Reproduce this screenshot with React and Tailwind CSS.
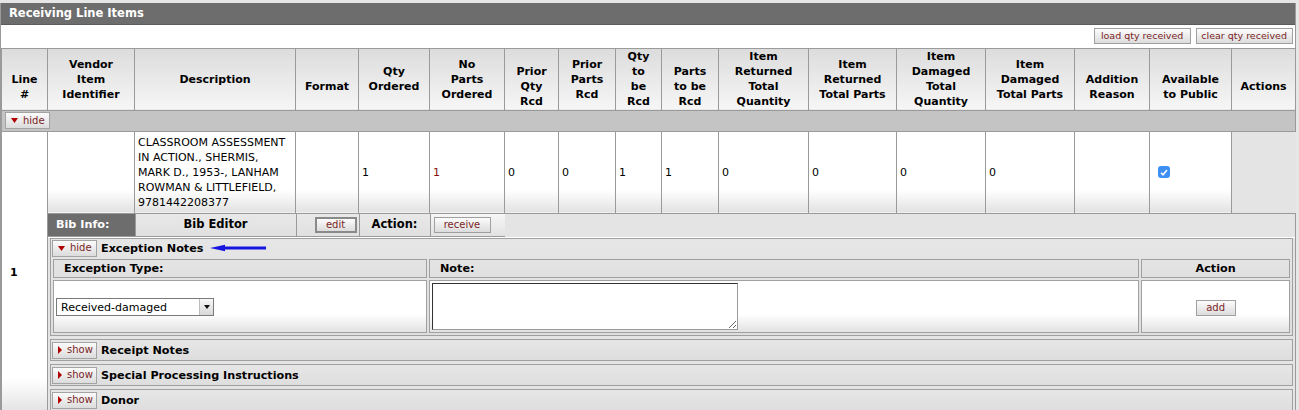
import React from 'react';

const headers = [
  { lines: ['Line', '#'], pb: 'pb-[8px]' },
  { lines: ['Vendor', 'Item', 'Identifier'], pb: 'pb-[8px]' },
  { lines: ['Description'], pb: 'pb-[23px]' },
  { lines: ['Format'], pb: 'pb-[16px]' },
  { lines: ['Qty', 'Ordered'], pb: 'pb-[16px]' },
  { lines: ['No', 'Parts', 'Ordered'], pb: 'pb-[8px]' },
  { lines: ['Prior', 'Qty', 'Rcd'], pb: 'pb-[1px]' },
  { lines: ['Prior', 'Parts', 'Rcd'], pb: 'pb-[8px]' },
  { lines: ['Qty', 'to', 'be', 'Rcd'], pb: 'pb-[1px]' },
  { lines: ['Parts', 'to be', 'Rcd'], pb: 'pb-[1px]' },
  { lines: ['Item', 'Returned', 'Total', 'Quantity'], pb: 'pb-[1px]' },
  { lines: ['Item', 'Returned', 'Total Parts'], pb: 'pb-[8px]' },
  { lines: ['Item', 'Damaged', 'Total', 'Quantity'], pb: 'pb-[1px]' },
  { lines: ['Item', 'Damaged', 'Total Parts'], pb: 'pb-[8px]' },
  { lines: ['Addition', 'Reason'], pb: 'pb-[8px]' },
  { lines: ['Available', 'to Public'], pb: 'pb-[8px]' },
  { lines: ['Actions'], pb: 'pb-[16px]' },
];

// values after the description column
const values = ['', '1', '1', '0', '0', '1', '1', '0', '0', '0', '0', ''];

const dataCell =
  'border border-[#9a9a9a] bg-linear-to-b from-white from-[72%] to-[#e2e2e2] align-middle pl-[3px] pr-[2px]';

const Btn = ({ children, className = '' }) => (
  <button
    className={`h-[16px] whitespace-nowrap border border-[#a0a0a0] bg-linear-to-b from-[#fcfcfc] to-[#dcdcdc] px-[4px] leading-[14px] text-[#7a1f1f] ${className}`}
  >
    {children}
  </button>
);

const Toggle = ({ open }) => (
  <button className="flex h-[17px] w-[45px] items-center gap-[5px] border border-[#a3a3a3] bg-linear-to-b from-[#fbfbfb] to-[#dcdcdc] pl-[5px] text-[10px] leading-none text-[#7a1f1f]">
    {open ? (
      <svg width="7" height="5" viewBox="0 0 7 5">
        <path d="M0 0h7L3.5 5z" fill="#b00000" />
      </svg>
    ) : (
      <svg width="4" height="8" viewBox="0 0 4 8">
        <path d="M0 0v8l4-4z" fill="#b00000" />
      </svg>
    )}
    <span>{open ? 'hide' : 'show'}</span>
  </button>
);

const SectionHead = ({ open, title, arrow }) => (
  <div className={`flex items-center gap-[4px] pl-[1px] ${open ? 'h-[18px]' : 'h-[20px]'}`}>
    <Toggle open={open} />
    <span className="text-[11.2px] font-bold text-black">{title}</span>
    {arrow && (
      <svg width="56" height="8" viewBox="0 0 56 8" className="ml-[3px]">
        <path d="M0 4L15 0.8V7.2Z" fill="#1616e0" />
        <rect x="13" y="2.5" width="43" height="3" fill="#1616e0" />
      </svg>
    )}
  </div>
);

const Section = ({ title }) => (
  <div className="mx-[2px] mt-[3px] border border-[#a0a0a0] bg-linear-to-b from-[#e6e6e6] to-[#dedede]">
    <SectionHead title={title} />
  </div>
);

export default function App() {
  return (
    <div className="min-h-[410px] bg-[#e6e6e6] pt-[3px] font-['DejaVu_Sans',Verdana,sans-serif] text-[11px] leading-[15px] text-black">
      <div className="w-[1296px] border-x border-[#9a9a9a] bg-white">
        <div className="flex h-[22px] items-center border-b border-[#5c5c5c] bg-[#6d6d6d] pl-[8px] text-[11.5px] font-bold text-white">
          Receiving Line Items
        </div>
        <table className="w-[1294px] table-fixed border-collapse">
          <colgroup>
            <col className="w-[46px]" />
            <col className="w-[87px]" />
            <col className="w-[161px]" />
            <col className="w-[63px]" />
            <col className="w-[71px]" />
            <col className="w-[75px]" />
            <col className="w-[54px]" />
            <col className="w-[57px]" />
            <col className="w-[46px]" />
            <col className="w-[57px]" />
            <col className="w-[90px]" />
            <col className="w-[88px]" />
            <col className="w-[89px]" />
            <col className="w-[89px]" />
            <col className="w-[75px]" />
            <col className="w-[82px]" />
            <col className="w-[64px]" />
          </colgroup>
          <tbody>
            <tr className="h-[23px]">
              <td colSpan={17} className="pr-[3px] align-middle">
                <div className="flex justify-end gap-[5px]">
                  <Btn className="w-[97px] text-[9.5px]">load qty received</Btn>
                  <Btn className="w-[97px] text-[9.5px]">clear qty received</Btn>
                </div>
              </td>
            </tr>
            <tr className="h-[62px]">
              {headers.map((h, i) => (
                <th
                  key={i}
                  className={`border border-[#9a9a9a] bg-linear-to-b from-[#dcdcdc] to-[#f6f6f6] px-[2px] text-center align-bottom text-[11px] font-bold leading-[15px] ${h.pb}`}
                >
                  {h.lines.map((l, j) => (
                    <div key={j}>{l}</div>
                  ))}
                </th>
              ))}
            </tr>
            <tr className="h-[21px]">
              <td colSpan={17} className="border border-[#9a9a9a] bg-[#c4c4c4] pl-[3px] align-middle">
                <Toggle open />
              </td>
            </tr>
            <tr className="h-[82px]">
              <td
                rowSpan={2}
                className="border border-[#9a9a9a] bg-linear-to-b from-white from-[88%] to-[#e2e2e2] pl-[8px] align-middle font-bold"
              >
                1
              </td>
              <td className={dataCell}></td>
              <td className={dataCell}>
                CLASSROOM ASSESSMENT IN ACTION., SHERMIS, MARK D., 1953-, LANHAM ROWMAN &amp; LITTLEFIELD,
                9781442208377
              </td>
              {values.map((v, i) => (
                <td key={i} className={`${dataCell} ${i === 2 ? 'text-[#8a0f0f]' : ''}`}>
                  {v}
                </td>
              ))}
              <td className={`${dataCell} pl-[8px]`}>
                <span className="flex h-[12px] w-[12px] items-center justify-center rounded-[3px] bg-[#3d8ff2]">
                  <svg width="8" height="7" viewBox="0 0 8 7">
                    <path d="M1 3.8L3 5.8L7 1" fill="none" stroke="white" strokeWidth="1.6" />
                  </svg>
                </span>
              </td>
              <td className="bg-[#e4e4e4]"></td>
            </tr>
            <tr>
              <td colSpan={16} className="border border-[#9a9a9a] bg-[#e4e4e4] p-0 align-top">
                <table className="w-[457px] table-fixed border-collapse">
                  <colgroup>
                    <col className="w-[87px]" />
                    <col className="w-[161px]" />
                    <col className="w-[63px]" />
                    <col className="w-[71px]" />
                    <col className="w-[75px]" />
                  </colgroup>
                  <tbody>
                    <tr className="h-[23px]">
                      <td className="border-r border-b border-[#9a9a9a] bg-[#6d6d6d] pl-[8px] align-middle text-[11.2px] font-bold text-white">
                        Bib Info:
                      </td>
                      <td className="border-r border-b border-[#9a9a9a] bg-linear-to-b from-[#e8e8e8] to-[#e0e0e0] text-center align-middle text-[11.5px] font-bold">
                        Bib Editor
                      </td>
                      <td className="border-r border-b border-[#9a9a9a] bg-linear-to-b from-[#e8e8e8] to-[#e0e0e0] pr-[2px] text-right align-middle">
                        <button className="h-[16px] w-[42px] border-2 border-[#8a8a8a] bg-linear-to-b from-[#fcfcfc] to-[#dcdcdc] text-[10px] leading-[12px] text-[#7a1f1f]">
                          edit
                        </button>
                      </td>
                      <td className="border-r border-b border-[#9a9a9a] bg-linear-to-b from-[#e8e8e8] to-[#e0e0e0] text-center align-middle text-[11.5px] font-bold">
                        Action:
                      </td>
                      <td className="border-b border-[#9a9a9a] bg-linear-to-b from-[#f6f6f6] to-[#e2e2e2] pl-[3px] align-middle">
                        <Btn className="w-[57px] text-[10px]">receive</Btn>
                      </td>
                    </tr>
                  </tbody>
                </table>
                <div className="border-t border-white pb-[2px]">
                  <div className="mx-[2px] border border-[#a0a0a0] bg-linear-to-b from-[#e6e6e6] to-[#dedede]">
                    <SectionHead open title="Exception Notes" arrow />
                    <table className="w-full table-fixed border-separate border-spacing-[2px]">
                      <colgroup>
                        <col className="w-[374px]" />
                        <col />
                        <col className="w-[149px]" />
                      </colgroup>
                      <tbody>
                        <tr className="h-[19px]">
                          <td className="border border-[#a0a0a0] bg-linear-to-b from-[#e4e4e4] to-[#e0e0e0] pl-[10px] align-middle text-[11.2px] font-bold">
                            Exception Type:
                          </td>
                          <td className="border border-[#a0a0a0] bg-linear-to-b from-[#e4e4e4] to-[#e0e0e0] pl-[10px] align-middle text-[11.2px] font-bold">
                            Note:
                          </td>
                          <td className="border border-[#a0a0a0] bg-linear-to-b from-[#e4e4e4] to-[#e0e0e0] text-center align-middle text-[11.2px] font-bold">
                            Action
                          </td>
                        </tr>
                        <tr className="h-[53px]">
                          <td className="border border-[#a0a0a0] bg-linear-to-b from-white from-[65%] to-[#e2e2e2] pl-[2px] align-middle">
                            <div className="mt-[1px] flex h-[18px] w-[158px] items-center justify-between border border-[#7a7a7a] bg-white pl-[4px]">
                              <span className="text-[11px]">Received-damaged</span>
                              <span className="flex h-[16px] w-[14px] items-center justify-center border-l border-[#bdbdbd] bg-linear-to-b from-[#f8f8f8] to-[#d8d8d8]">
                                <svg width="6" height="4" viewBox="0 0 6 4">
                                  <path d="M0 0h6L3 4z" fill="#111" />
                                </svg>
                              </span>
                            </div>
                          </td>
                          <td className="border border-[#a0a0a0] bg-linear-to-b from-white from-[65%] to-[#e2e2e2] pl-[2px] align-middle">
                            <textarea
                              className="block h-[47px] w-[306px] border border-t-[#333] border-l-[#333] border-r-[#999] border-b-[#999] bg-white"
                              defaultValue=""
                            />
                          </td>
                          <td className="border border-[#a0a0a0] bg-linear-to-b from-white from-[65%] to-[#e2e2e2] text-center align-middle">
                            <Btn className="mt-[2px] w-[40px] text-[10px]">add</Btn>
                          </td>
                        </tr>
                      </tbody>
                    </table>
                  </div>
                  <div className="mt-[3px]" />
                  <Section title="Receipt Notes" />
                  <Section title="Special Processing Instructions" />
                  <Section title="Donor" />
                </div>
              </td>
            </tr>
          </tbody>
        </table>
      </div>
    </div>
  );
}
